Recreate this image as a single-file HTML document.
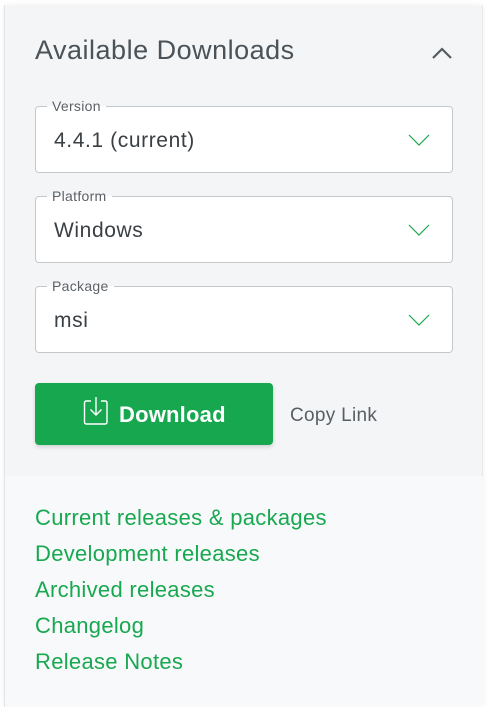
<!DOCTYPE html>
<html><head><style>
*{margin:0;padding:0;box-sizing:border-box}
body{width:491px;height:707px;background:#fff;font-family:"Liberation Sans",sans-serif;position:relative;overflow:hidden}
.card{position:absolute;left:4px;top:5px;width:479px;height:702px;background:#f4f5f7;border-left:1px solid #e2e4e6;border-right:1px solid #e6e8ea;box-shadow:0 0 6px rgba(0,0,0,.06)}
.lower{position:absolute;left:5px;top:476px;width:478px;height:231px;background:#f8f9fb}
.title{position:absolute;left:35px;top:35px;font-size:27px;color:#4a5358;letter-spacing:.5px}
.sel{position:absolute;left:35px;width:418px;height:67px;background:#fff;border:1px solid #c4c8cb;border-radius:4px}
.sel .lab{position:absolute;left:11px;top:-10px;padding:0 5px;font-size:14px;color:#5c6166;line-height:18px;letter-spacing:.3px;background:linear-gradient(#f4f5f7 50%,#fff 50%)}
.sel .val{position:absolute;left:18px;top:22px;font-size:21px;color:#3a3f44;letter-spacing:.6px}
.sel svg{position:absolute;right:22px;top:27px}
.btn{position:absolute;left:35px;top:383px;width:238px;height:62px;background:#17a84f;border-radius:4px;box-shadow:0 2px 4px rgba(0,0,0,.15);color:#fff;font-weight:bold;font-size:22px}
.btn span{position:absolute;left:84px;top:19px;letter-spacing:.2px}
.btn svg{position:absolute;left:48px;top:13px}
.copy{position:absolute;left:290px;top:405px;font-size:19px;color:#595e63;letter-spacing:.3px}
.links{position:absolute;left:35px;top:500px;font-size:22px;color:#18a84f;line-height:36px;letter-spacing:.3px}
</style></head><body>
<div class="card"></div>
<div class="lower"></div>
<div class="title">Available Downloads</div>
<svg style="position:absolute;left:431px;top:46px" width="22" height="14"><path d="M2 12 L11 3 L20 12" fill="none" stroke="#555b60" stroke-width="2.2"/></svg>
<div class="sel" style="top:106px"><div class="lab">Version</div><div class="val">4.4.1 (current)</div><svg width="22" height="12"><path d="M1 1 L11 11 L21 1" fill="none" stroke="#1aa64e" stroke-width="1.2"/></svg></div>
<div class="sel" style="top:196px"><div class="lab">Platform</div><div class="val">Windows</div><svg width="22" height="12"><path d="M1 1 L11 11 L21 1" fill="none" stroke="#1aa64e" stroke-width="1.2"/></svg></div>
<div class="sel" style="top:286px"><div class="lab">Package</div><div class="val">msi</div><svg width="22" height="12"><path d="M1 1 L11 11 L21 1" fill="none" stroke="#1aa64e" stroke-width="1.2"/></svg></div>
<div class="btn"><svg width="26" height="30"><path d="M8 5 H3.5 Q1.5 5 1.5 7 V26 Q1.5 28 3.5 28 H22 Q24 28 24 26 V7 Q24 5 22 5 H18" fill="none" stroke="#fff" stroke-width="1.4"/><path d="M13 1 V19 M7.5 13.5 L13 19 L18.5 13.5" fill="none" stroke="#fff" stroke-width="1.4"/></svg><span>Download</span></div>
<div class="copy">Copy Link</div>
<div class="links">Current releases &amp; packages<br>Development releases<br>Archived releases<br>Changelog<br>Release Notes</div>
</body></html>
